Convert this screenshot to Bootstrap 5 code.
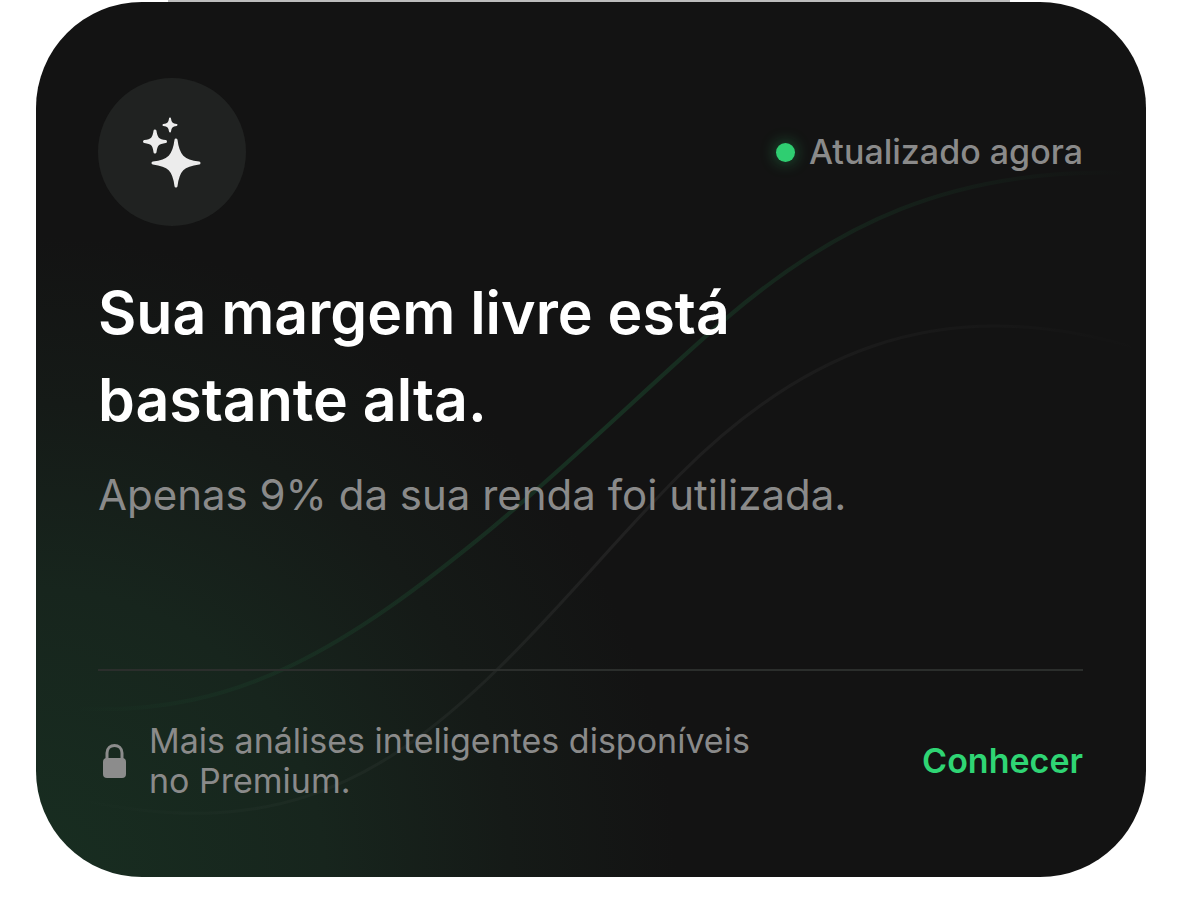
<!DOCTYPE html>
<html lang="pt-BR">
<head>
<meta charset="utf-8">
<meta name="viewport" content="width=device-width, initial-scale=1">
<title>Margem livre</title>
<link href="https://cdn.jsdelivr.net/npm/bootstrap@5.3.0/dist/css/bootstrap.min.css" rel="stylesheet">
<style>
body { background: #fff; font-family: Inter, "Liberation Sans", sans-serif; }
.page { padding: 2px 54px 22px 36px; }
.insight {
  border: 0; border-radius: 106px; overflow: hidden;
  padding: 76px 63px 76px 62px; color: #fff;
  background: radial-gradient(circle 640px at 0 100%, #182e21 0%, #17251d 45%, #151a17 74%, #131313 100%) no-repeat #131313;
}
.edge { position: absolute; top: 0; left: 168px; right: 190px; height: 2px; background: #bdbdbd; }
.curves { position: absolute; inset: 0; width: 100%; height: 100%; }
.insight-icon { width: 148px; height: 148px; background: #202221; }
.status { font-size: 34px; line-height: 40px; font-weight: 500; color: #8a8a8a; gap: 14px; }
.dot { width: 19px; height: 19px; background: #2fce71; box-shadow: 0 0 16px rgba(47, 206, 113, .45); }
.headline { font-size: 59px; line-height: 87px; font-weight: 600; max-width: 720px; margin: 43px 0 0; }
.detail { font-size: 42px; line-height: 56px; color: #8a8a8a; margin: 24px 0 0; }
.insight hr { margin: 146px 0 50px; border-top: 2px solid #2b2e2c; opacity: 1; }
.premium { font-size: 34px; line-height: 40px; color: #8a8a8a; max-width: 680px; gap: 22px; padding-left: 4px; }
.more { font-size: 34px; line-height: 40px; font-weight: 600; color: #2fd574; }
.more:hover { color: #5be393; }
</style>
</head>
<body>
<div class="edge"></div>
<main class="page">
  <section class="card insight position-relative">
    <svg class="curves" viewBox="36 3 1110 874" preserveAspectRatio="none" fill="none" aria-hidden="true">
      <defs>
        <linearGradient id="g1" gradientUnits="userSpaceOnUse" x1="70" y1="0" x2="1130" y2="0">
          <stop offset="0" stop-color="#2fce71" stop-opacity="0"/>
          <stop offset=".5" stop-color="#2fce71" stop-opacity=".16"/>
          <stop offset="1" stop-color="#2fce71" stop-opacity="0"/>
        </linearGradient>
        <linearGradient id="g2" gradientUnits="userSpaceOnUse" x1="70" y1="0" x2="1150" y2="0">
          <stop offset="0" stop-color="#fff" stop-opacity="0"/>
          <stop offset=".5" stop-color="#fff" stop-opacity=".06"/>
          <stop offset="1" stop-color="#fff" stop-opacity="0"/>
        </linearGradient>
      </defs>
      <path d="M80 709C240 716 350 645 490 530C570 464 650 385 725 320C830 230 950 165 1140 174" stroke="url(#g1)" stroke-width="4"/>
      <path d="M80 800C260 838 370 795 500 667C565 603 620 535 680 475C790 365 930 285 1140 350" stroke="url(#g2)" stroke-width="3"/>
    </svg>

    <header class="position-relative d-flex align-items-center justify-content-between">
      <div class="insight-icon rounded-circle flex-shrink-0">
        <svg width="148" height="148" viewBox="98 78 148 148" fill="#ececec" stroke="#ececec" stroke-width="3" stroke-linejoin="round" aria-hidden="true">
          <path d="M176 140C178 156 183 161 199 163C183 165 178 170 176 186C174 170 169 165 153 163C169 161 174 156 176 140Z"/>
          <path d="M155 131C156 138.500 158 140.500 165.500 141.500C158 142.500 156 144.500 155 152C154 144.500 152 142.500 144.500 141.500C152 140.500 154 138.500 155 131Z"/>
          <path stroke-width="2" d="M170 118.500C170.500 123 172 124.500 176.500 125C172 125.500 170.500 127 170 131.500C169.500 127 168 125.500 163.500 125C168 124.500 169.500 123 170 118.500Z"/>
        </svg>
      </div>
      <div class="status d-flex align-items-center">
        <span class="dot rounded-circle"></span>
        <span>Atualizado agora</span>
      </div>
    </header>

    <h1 class="headline position-relative">Sua margem livre está bastante alta.</h1>
    <p class="detail position-relative">Apenas 9% da sua renda foi utilizada.</p>
    <hr class="position-relative">

    <footer class="position-relative d-flex align-items-center justify-content-between">
      <div class="premium d-flex align-items-center">
        <svg class="flex-shrink-0" width="25" height="36" viewBox="0 0 25 36" fill="none" aria-hidden="true">
          <path d="M5 17V10C5 0 20 0 20 10V17" stroke="#8c8c8c" stroke-width="3"/>
          <rect x="1" y="15" width="23" height="20" rx="4" fill="#8c8c8c"/>
        </svg>
        <span>Mais análises inteligentes disponíveis no Premium.</span>
      </div>
      <a class="more text-decoration-none" href="#premium">Conhecer</a>
    </footer>
  </section>
</main>
<script src="https://cdn.jsdelivr.net/npm/bootstrap@5.3.0/dist/js/bootstrap.bundle.min.js"></script>
</body>
</html>
